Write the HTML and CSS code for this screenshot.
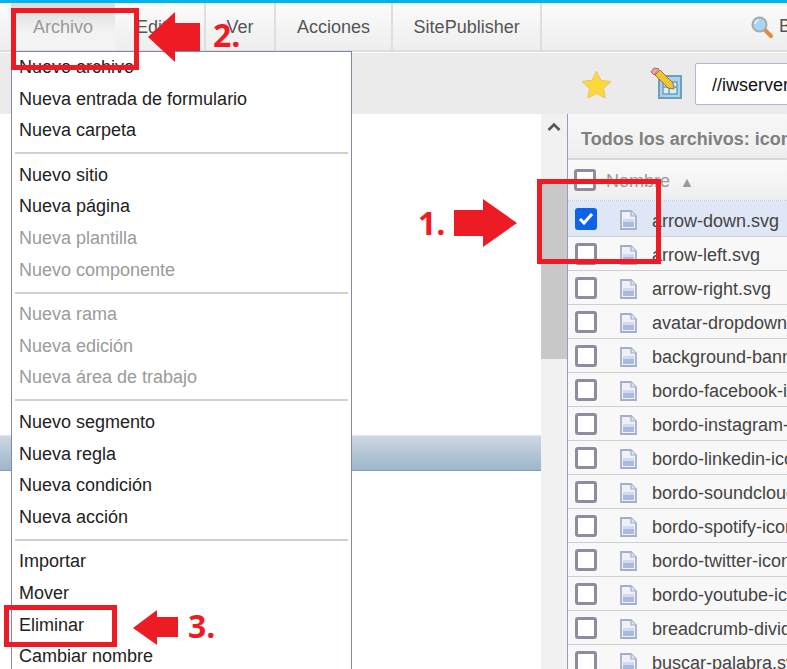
FILE: index.html
```html
<!DOCTYPE html>
<html lang="es">
<head>
    <meta charset="UTF-8">
    <title>Archivo - Eliminar</title>
    <link rel="stylesheet" href="styles.css">
</head>
<body>
    <svg class="defs" width="0" height="0">
        <symbol id="file" viewBox="0 0 17 20">
            <path d="M1 1h10l5 5v13H1z" fill="#eef1f8" stroke="#a3aec8" stroke-width="1.800"/>
            <path d="M11 1v5h5" fill="#dfe4f0" stroke="#a3aec8" stroke-width="1.200"/>
            <rect x="3" y="9" width="11" height="3" fill="#d3daee"/>
            <rect x="3" y="12" width="11" height="5" fill="#a9b9e2"/>
        </symbol>
    </svg>

    <div class="topline"></div>

    <nav class="nav">
        <a class="tab tab-active">Archivo</a>
        <a class="tab">Editar</a>
        <a class="tab">Ver</a>
        <a class="tab">Acciones</a>
        <a class="tab">SitePublisher</a>
        <div class="search">
            <svg width="22" height="22" viewBox="0 0 22 22">
                <path d="M13 13l7 7" stroke="#e8893a" stroke-width="4" stroke-linecap="round"/>
                <circle cx="8.500" cy="8.500" r="7" fill="#a9d6f2" stroke="#a3adb5" stroke-width="2"/>
                <path d="M4 8a4.500 4.500 0 0 1 4-4" stroke="#e8f6ff" stroke-width="1.500" fill="none"/>
            </svg>
            <span>Buscar</span>
        </div>
    </nav>

    <div class="toolbar">
        <svg class="star" width="31" height="28" viewBox="0 0 31 28">
            <path d="M15.500 1l4.400 9.300 10.100 1.200-7.500 6.900 2 10-9-5-9 5 2-10L1 11.500l10.100-1.200z" fill="#fbd93a" stroke="#e6c66a" stroke-width="1"/>
        </svg>
        <span class="divider"></span>
        <svg class="edit-icon" width="33" height="33" viewBox="0 0 33 33">
            <rect x="9" y="9" width="22" height="22" fill="#a9d3ea" stroke="#6f9fc0" stroke-width="2"/>
            <path d="M13 15h14v12H13zM19 15v12M13 20h14" fill="#d9eef8" stroke="#6f9fc0" stroke-width="1.500"/>
            <path d="M5 8l5-5 13 13 1 6-6-1z" fill="#f4c430" stroke="#8a7a40" stroke-width="1"/>
            <path d="M1 5l3-4 5 1-5 6z" fill="#eda5a5" stroke="#c06060" stroke-width="1"/>
        </svg>
        <div class="path-input">//iwserver/default/main/Sitio/WORKAREA</div>
    </div>

    <div class="main">
        <div class="left-pane">
            <div class="band"></div>
        </div>
        <div class="scrollbar">
            <svg class="chevron" width="14" height="10" viewBox="0 0 14 10">
                <path d="M1.500 8L7 2.500 12.500 8" fill="none" stroke="#555" stroke-width="2.500"/>
            </svg>
            <div class="thumb"></div>
        </div>
        <div class="panel">
            <div class="panel-title">Todos los archivos: icons</div>
            <div class="list-head">
                <span class="check check-head"></span>
                <span class="head-name">Nombre</span>
                <span class="sort">▲</span>
            </div>
            <div class="row row-selected">
                <span class="check check-on">
                    <svg width="16" height="14" viewBox="0 0 16 14"><path d="M2 7l4 4 8-9" fill="none" stroke="#fff" stroke-width="3"/></svg>
                </span>
                <svg class="file" width="17" height="20"><use href="#file"/></svg>
                <span class="name">arrow-down.svg</span>
            </div>
            <div class="row"><span class="check"></span><svg class="file" width="17" height="20"><use href="#file"/></svg><span class="name">arrow-left.svg</span></div>
            <div class="row"><span class="check"></span><svg class="file" width="17" height="20"><use href="#file"/></svg><span class="name">arrow-right.svg</span></div>
            <div class="row"><span class="check"></span><svg class="file" width="17" height="20"><use href="#file"/></svg><span class="name">avatar-dropdown.svg</span></div>
            <div class="row"><span class="check"></span><svg class="file" width="17" height="20"><use href="#file"/></svg><span class="name">background-banner.svg</span></div>
            <div class="row"><span class="check"></span><svg class="file" width="17" height="20"><use href="#file"/></svg><span class="name">bordo-facebook-icon.svg</span></div>
            <div class="row"><span class="check"></span><svg class="file" width="17" height="20"><use href="#file"/></svg><span class="name">bordo-instagram-icon.svg</span></div>
            <div class="row"><span class="check"></span><svg class="file" width="17" height="20"><use href="#file"/></svg><span class="name">bordo-linkedin-icon.svg</span></div>
            <div class="row"><span class="check"></span><svg class="file" width="17" height="20"><use href="#file"/></svg><span class="name">bordo-soundcloud-icon.svg</span></div>
            <div class="row"><span class="check"></span><svg class="file" width="17" height="20"><use href="#file"/></svg><span class="name">bordo-spotify-icon.svg</span></div>
            <div class="row"><span class="check"></span><svg class="file" width="17" height="20"><use href="#file"/></svg><span class="name">bordo-twitter-icon.svg</span></div>
            <div class="row"><span class="check"></span><svg class="file" width="17" height="20"><use href="#file"/></svg><span class="name">bordo-youtube-icon.svg</span></div>
            <div class="row"><span class="check"></span><svg class="file" width="17" height="20"><use href="#file"/></svg><span class="name">breadcrumb-divider.svg</span></div>
            <div class="row"><span class="check"></span><svg class="file" width="17" height="20"><use href="#file"/></svg><span class="name">buscar-palabra.svg</span></div>
        </div>
    </div>

    <!-- menu abierto sobre la pagina -->
    <div class="menu">
        <div class="item">Nuevo archivo</div>
        <div class="item">Nueva entrada de formulario</div>
        <div class="item">Nueva carpeta</div>
        <div class="sep"></div>
        <div class="item">Nuevo sitio</div>
        <div class="item">Nueva página</div>
        <div class="item off">Nueva plantilla</div>
        <div class="item off">Nuevo componente</div>
        <div class="sep"></div>
        <div class="item off">Nueva rama</div>
        <div class="item off">Nueva edición</div>
        <div class="item off">Nueva área de trabajo</div>
        <div class="sep"></div>
        <div class="item">Nuevo segmento</div>
        <div class="item">Nueva regla</div>
        <div class="item">Nueva condición</div>
        <div class="item">Nueva acción</div>
        <div class="sep"></div>
        <div class="item">Importar</div>
        <div class="item">Mover</div>
        <div class="item">Eliminar</div>
        <div class="item">Cambiar nombre</div>
    </div>

    <!-- anotaciones en rojo -->
    <div class="mark mark-1"></div>
    <div class="mark mark-2"></div>
    <div class="mark mark-3"></div>

    <svg class="arrow arrow-1" width="64" height="48" viewBox="0 0 64 48"><path d="M0 11h29V0l34 24-34 24V37H0z" fill="#ed1c24"/></svg>
    <svg class="arrow arrow-2" width="52" height="50" viewBox="0 0 52 50"><path d="M52 11H27V0L0 25l27 25V39h25z" fill="#ed1c24"/></svg>
    <svg class="arrow arrow-3" width="45" height="35" viewBox="0 0 45 35"><path d="M45 7H24V0L0 18l24 17V27h21z" fill="#ed1c24"/></svg>

    <span class="num num-1">1.</span>
    <span class="num num-2">2.</span>
    <span class="num num-3">3.</span>
</body>
</html>
```

FILE: styles.css
```css
* {
    box-sizing: border-box;
    margin: 0;
    padding: 0;
}

body {
    position: relative;
    width: 787px;
    height: 669px;
    overflow: hidden;
    background-color: white;
    font-family: "Liberation Sans", Arial, sans-serif;
    font-size: 18px;
    color: #222;
}

.defs {
    position: absolute;
}

.topline {
    height: 3px;
    background-color: #00b4f0;
}

.nav {
    display: flex;
    height: 49px;
    padding-left: 11px;
    background: linear-gradient(#fbfbfb, #eeeeee);
    border-bottom: 2px solid #dddddd;
    overflow: hidden;
}

.tab {
    display: flex;
    align-items: center;
    padding: 2px 20.500px 0 21px;
    border-right: 2px solid #dedede;
    color: #555;
}

.tab-active {
    width: 104px;
    padding-left: 22px;
    border-right: none;
    color: #999;
    background: linear-gradient(#d9d9d9, #f3f3f3 60%);
}

.search {
    display: flex;
    align-items: center;
    gap: 6px;
    margin-left: auto;
    width: 36px;
    white-space: nowrap;
    color: #555;
}

.search svg {
    flex: none;
}

.toolbar {
    display: flex;
    align-items: center;
    height: 61px;
    margin-top: 1px;
    padding-left: 581px;
    background-color: #ebebeb;
}

.divider {
    width: 2px;
    height: 18px;
    margin: 0 19px;
    background-color: #a8a8a8;
}

.edit-icon {
    flex: none;
}

.star {
    flex: none;
}

.path-input {
    flex: none;
    width: 300px;
    height: 42px;
    margin-left: 12px;
    padding-left: 16px;
    line-height: 42px;
    background-color: white;
    border: 1px solid #b6b6d0;
    border-radius: 2px;
    color: #111;
    white-space: nowrap;
    overflow: hidden;
}

.main {
    display: flex;
    height: 555px;
}

.left-pane {
    width: 541px;
    padding-top: 321px;
}

.band {
    height: 36px;
    background: linear-gradient(#cdd7e2, #9db5ca);
    border-top: 1px solid #dfe5ec;
    border-bottom: 1px solid #7f9cb8;
}

.scrollbar {
    position: relative;
    width: 26px;
    background-color: #f1f1f1;
    padding: 8px 0 0 6px;
}

.chevron {
    display: block;
}

.thumb {
    height: 175px;
    margin: 52px 0 0 -6px;
    background-color: #c8c8c8;
}

.panel {
    width: 220px;
    background-color: #f8f8f8;
    border-left: 1px solid #8f9fc4;
}

.panel-title {
    height: 46px;
    padding-left: 13px;
    line-height: 50px;
    font-weight: bold;
    color: #808080;
    white-space: nowrap;
    overflow: hidden;
    background: linear-gradient(#f8f8f8, #eeeeee);
    border-bottom: 2px solid #d8d8d8;
}

.list-head {
    display: flex;
    align-items: center;
    height: 41px;
    padding-left: 6px;
    color: #999;
    background: linear-gradient(#fbfbfb, #eeeeee);
    border-bottom: 1px dotted #c8c8d4;
}

.head-name {
    margin-left: 10px;
    padding-top: 3px;
}

.sort {
    margin-left: 10px;
    padding-top: 3px;
    font-size: 14px;
}

.row {
    display: flex;
    align-items: center;
    height: 34px;
    padding-left: 7px;
    border-bottom: 1px solid #cfcfcf;
    white-space: nowrap;
    color: #444;
}

.row-selected {
    height: 36px;
    background-color: #dfe6f5;
}

.check {
    flex: none;
    display: flex;
    align-items: center;
    justify-content: center;
    width: 22px;
    height: 22px;
    background-color: white;
    border: 3px solid #8e8c9e;
    border-radius: 3px;
}

.check-on {
    background-color: #0e62e8;
    border-color: #0e62e8;
}

.file {
    flex: none;
    margin: 2px 0 0 23px;
}

.name {
    margin-left: 15px;
    padding-top: 3px;
}

.row-selected .name {
    padding-top: 5px;
}

.menu {
    position: absolute;
    top: 51px;
    left: 11px;
    width: 341px;
    height: 640px;
    background-color: white;
    border: 1px solid #8088b0;
}

.item {
    height: 31.600px;
    padding-left: 7px;
    line-height: 30px;
    color: #222;
}

.off {
    color: #9b9b9b;
}

.sep {
    height: 2px;
    margin: 5.500px 3px;
    background-color: #cfcfd8;
}

.mark {
    position: absolute;
    border: 5px solid #ed1c24;
}

.mark-1 {
    left: 537px;
    top: 179px;
    width: 124px;
    height: 85px;
}

.mark-2 {
    left: 11px;
    top: 8px;
    width: 128px;
    height: 62px;
}

.mark-3 {
    left: 4px;
    top: 605px;
    width: 113px;
    height: 42px;
}

.arrow {
    position: absolute;
}

.arrow-1 {
    left: 454px;
    top: 199px;
}

.arrow-2 {
    left: 148px;
    top: 12px;
}

.arrow-3 {
    left: 133px;
    top: 610px;
}

.num {
    position: absolute;
    font-family: "Open Sans", sans-serif;
    font-size: 32px;
    font-weight: bold;
    line-height: 36px;
    color: #ed1c24;
}

.num-1 {
    left: 418px;
    top: 205px;
}

.num-2 {
    left: 213px;
    top: 17px;
}

.num-3 {
    left: 188px;
    top: 608px;
}
```
